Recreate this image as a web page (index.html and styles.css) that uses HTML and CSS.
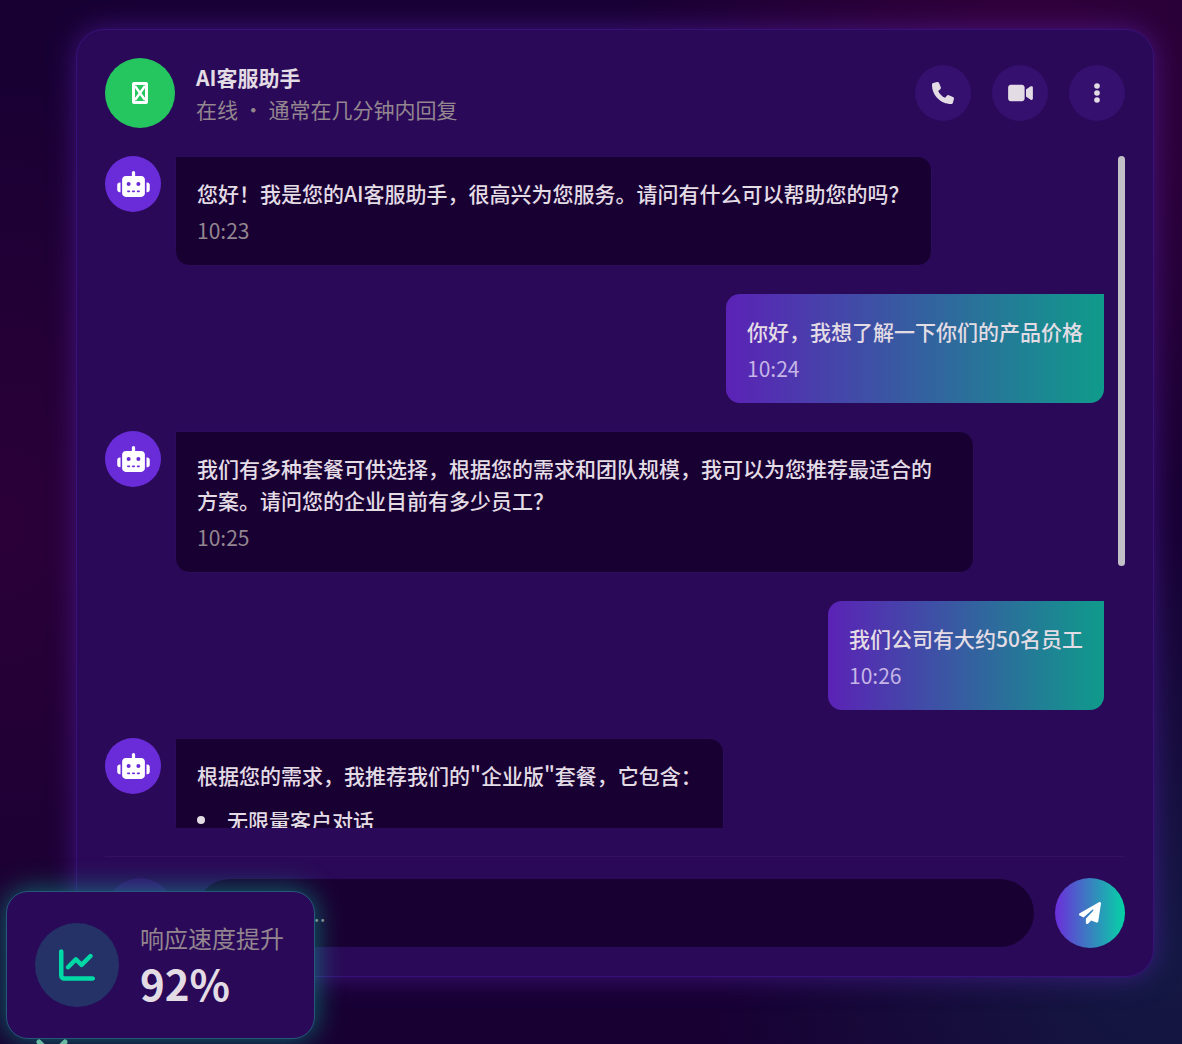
FILE: index.html
```html
<!DOCTYPE html>
<html lang="zh-CN">
<head>
    <meta charset="UTF-8">
    <meta name="viewport" content="width=device-width, initial-scale=1.0">
    <title>AI客服助手</title>
    <link rel="stylesheet" href="styles.css">
</head>
<body>
    <!-- shared icons -->
    <svg class="sprite" aria-hidden="true">
        <symbol id="icon-robot" viewBox="0 0 640 512">
            <path d="M320 0c17.7 0 32 14.3 32 32V96H472c39.8 0 72 32.2 72 72V440c0 39.8-32.2 72-72 72H168c-39.8 0-72-32.2-72-72V168c0-39.8 32.2-72 72-72H288V32c0-17.7 14.3-32 32-32zM208 384c-8.8 0-16 7.2-16 16s7.2 16 16 16h32c8.8 0 16-7.2 16-16s-7.2-16-16-16H208zm96 0c-8.8 0-16 7.2-16 16s7.2 16 16 16h32c8.8 0 16-7.2 16-16s-7.2-16-16-16H304zm96 0c-8.8 0-16 7.2-16 16s7.2 16 16 16h32c8.8 0 16-7.2 16-16s-7.2-16-16-16H400zM264 256a40 40 0 1 0 -80 0 40 40 0 1 0 80 0zm152 40a40 40 0 1 0 0-80 40 40 0 1 0 0 80zM48 224H64V416H48c-26.5 0-48-21.5-48-48V272c0-26.5 21.5-48 48-48zm544 0c26.5 0 48 21.5 48 48v96c0 26.5-21.5 48-48 48H576V224h16z"/>
        </symbol>
    </svg>

    <main class="chat-card">
        <header class="chat-header">
            <div class="agent-avatar">
                <svg width="16" height="22" viewBox="0 0 16 22" fill="none" stroke="currentColor" stroke-width="3">
                    <rect x="1.5" y="1.5" width="13" height="19" rx="0.5"/>
                    <path stroke-width="2.4" d="M3 4l10 14M13 4L3 18"/>
                </svg>
            </div>
            <div class="agent-info">
                <h1>AI客服助手</h1>
                <p>在线 · 通常在几分钟内回复</p>
            </div>
            <div class="header-actions">
                <button type="button" class="round-button" aria-label="语音通话">
                    <svg width="22" height="22" viewBox="0 0 512 512"><path d="M164.9 24.6c-7.7-18.6-28-28.5-47.4-23.2l-88 24C12.1 30.2 0 46 0 64C0 311.4 200.6 512 448 512c18 0 33.8-12.1 38.6-29.5l24-88c5.3-19.4-4.6-39.7-23.2-47.4l-96-40c-16.3-6.8-35.2-2.1-46.3 11.6L304.7 368C234.3 334.7 177.3 277.7 144 207.3L193.3 167c13.7-11.2 18.4-30 11.6-46.3l-40-96z"/></svg>
                </button>
                <button type="button" class="round-button" aria-label="视频通话">
                    <svg width="25" height="22" viewBox="0 0 576 512"><path d="M0 128C0 92.7 28.7 64 64 64H320c35.3 0 64 28.7 64 64V384c0 35.3-28.7 64-64 64H64c-35.3 0-64-28.7-64-64V128zM559.1 99.8c10.4 5.6 16.9 16.4 16.9 28.2V384c0 11.8-6.5 22.6-16.9 28.2s-23 5-32.9-1.6l-96-64L416 337.1V320 192 174.9l14.2-9.5 96-64c9.8-6.5 22.4-7.2 32.9-1.6z"/></svg>
                </button>
                <button type="button" class="round-button" aria-label="更多">
                    <svg width="6" height="22" viewBox="0 0 6 22"><circle cx="3" cy="4" r="2.8"/><circle cx="3" cy="11" r="2.8"/><circle cx="3" cy="18" r="2.8"/></svg>
                </button>
            </div>
        </header>

        <div class="chat-body">
            <div class="messages">
                <div class="message bot">
                    <div class="bot-avatar"><svg width="33" height="26"><use href="#icon-robot"/></svg></div>
                    <div class="bubble">
                        <p>您好！我是您的AI客服助手，很高兴为您服务。请问有什么可以帮助您的吗？</p>
                        <time>10:23</time>
                    </div>
                </div>
                <div class="message user">
                    <div class="bubble">
                        <p>你好，我想了解一下你们的产品价格</p>
                        <time>10:24</time>
                    </div>
                </div>
                <div class="message bot">
                    <div class="bot-avatar"><svg width="33" height="26"><use href="#icon-robot"/></svg></div>
                    <div class="bubble">
                        <p>我们有多种套餐可供选择，根据您的需求和团队规模，我可以为您推荐最适合的方案。请问您的企业目前有多少员工？</p>
                        <time>10:25</time>
                    </div>
                </div>
                <div class="message user">
                    <div class="bubble">
                        <p>我们公司有大约50名员工</p>
                        <time>10:26</time>
                    </div>
                </div>
                <div class="message bot">
                    <div class="bot-avatar"><svg width="33" height="26"><use href="#icon-robot"/></svg></div>
                    <div class="bubble">
                        <p>根据您的需求，我推荐我们的"企业版"套餐，它包含：</p>
                        <ul>
                            <li>无限量客户对话</li>
                        </ul>
                    </div>
                </div>
            </div>
            <div class="scroll-track"><div class="scroll-thumb"></div></div>
        </div>

        <form class="chat-form">
            <button type="button" class="attach-button" aria-label="添加附件"></button>
            <input type="text" class="chat-input" placeholder="输入消息..." aria-label="输入消息">
            <button type="submit" class="send-button" aria-label="发送">
                <svg width="22" height="22" viewBox="0 0 512 512"><path d="M498.1 5.6c10.1 7 15.4 19.1 13.5 31.2l-64 416c-1.5 9.7-7.4 18.2-16 23s-18.9 5.4-28 1.6L284 427.7l-68.5 74.1c-8.9 9.7-22.9 12.9-35.2 8.1S160 493.2 160 480V396.4c0-4 1.5-7.8 4.2-10.7L331.8 202.8c5.8-6.3 5.6-16-.4-22s-15.7-6.4-22-.7L106 360.8 17.7 316.6C7.1 311.3 .3 300.7 0 288.9s5.9-22.8 16.1-28.7l448-256c10.7-6.1 23.9-5.5 34 1.4z"/></svg>
            </button>
        </form>
    </main>

    <!-- scroll hint under the floating card -->
    <svg class="scroll-hint" width="32" height="20" viewBox="0 0 32 20" fill="none" stroke="currentColor" stroke-width="5" stroke-linecap="round" stroke-linejoin="round"><path d="M3 3l13 13L29 3"/></svg>

    <aside class="stat-card">
        <div class="stat-icon">
            <svg width="36" height="36" viewBox="0 0 512 512"><path d="M64 64c0-17.7-14.3-32-32-32S0 46.3 0 64V400c0 44.2 35.8 80 80 80H480c17.7 0 32-14.3 32-32s-14.3-32-32-32H80c-8.8 0-16-7.2-16-16V64zm406.6 86.6c12.5-12.5 12.5-32.8 0-45.3s-32.8-12.5-45.3 0L320 210.7l-57.4-57.4c-12.5-12.5-32.8-12.5-45.3 0l-112 112c-12.5 12.5-12.5 32.8 0 45.3s32.8 12.5 45.3 0L240 221.3l57.4 57.4c12.5 12.5 32.8 12.5 45.3 0l128-128z"/></svg>
        </div>
        <div>
            <p class="stat-label">响应速度提升</p>
            <p class="stat-value">92%</p>
        </div>
    </aside>
</body>
</html>
```
FILE: styles.css
```css
* {
    box-sizing: border-box;
    margin: 0;
    padding: 0;
}

body {
    position: relative;
    display: flex;
    height: 100vh;
    padding: 29px 28px 67px 76px;
    overflow: hidden;
    font-family: "Noto Sans CJK SC", sans-serif;
    font-size: 21px;
    line-height: 32px;
    color: #e3dce5;
    background:
        radial-gradient(circle at 87% 10%, rgba(100, 0, 72, 0.4), transparent 30%),
        radial-gradient(circle at 98% 92%, rgba(14, 60, 90, 0.42), transparent 30%),
        radial-gradient(circle at 0% 50%, rgba(70, 0, 65, 0.42), transparent 36%),
        #180033;
}

button,
input {
    border: none;
    font: inherit;
    color: inherit;
}

button {
    display: flex;
    align-items: center;
    justify-content: center;
    flex-shrink: 0;
    border-radius: 50%;
    cursor: pointer;
}

svg {
    display: block;
    fill: currentColor;
}

svg[fill="none"] {
    fill: none;
}

.sprite {
    position: absolute;
    width: 0;
    height: 0;
}

.chat-card {
    flex: 1;
    min-width: 0;
    display: flex;
    flex-direction: column;
    padding: 28px;
    border: 1px solid #38127a;
    border-radius: 28px;
    background: #2a0a58;
    box-shadow: 0 0 28px rgba(100, 40, 200, 0.5);
}

/* header */
.chat-header {
    display: flex;
    align-items: center;
    gap: 21px;
    margin-bottom: 28px;
}

.agent-avatar {
    display: flex;
    align-items: center;
    justify-content: center;
    width: 70px;
    height: 70px;
    border-radius: 50%;
    color: #fff;
    background: #25c560;
}

.agent-info {
    flex: 1;
}

.agent-info h1 {
    font-size: 21px;
    font-weight: 700;
}

.agent-info p {
    color: #93868f;
}

.header-actions {
    display: flex;
    gap: 21px;
}

.round-button {
    width: 56px;
    height: 56px;
    background: #35106e;
}

/* messages */
.chat-body {
    flex: 1;
    min-height: 0;
    display: flex;
    gap: 14px;
}

.messages {
    flex: 1;
    min-width: 0;
    display: flex;
    flex-direction: column;
    gap: 28px;
    overflow: hidden;
}

.message {
    display: flex;
    align-items: flex-start;
    gap: 14px;
    flex-shrink: 0;
}

.message.user {
    justify-content: flex-end;
}

.bot-avatar {
    display: flex;
    align-items: center;
    justify-content: center;
    flex-shrink: 0;
    width: 56px;
    height: 56px;
    border-radius: 50%;
    color: #fff;
    background: #6a2cd8;
}

.bubble {
    max-width: 80%;
    padding: 21px;
    border-radius: 14px;
    font-weight: 500;
}

.bot .bubble {
    padding-top: 20px;
    border: 1px solid #2d0b5c;
    border-top-left-radius: 0;
    background: #190033;
}

.user .bubble {
    border-top-right-radius: 0;
    background: linear-gradient(90deg, #5b22b6, #0f9b8b);
}

.bubble time {
    display: block;
    margin-top: 7px;
    line-height: 28px;
    font-weight: 400;
    color: #93868f;
}

.user .bubble time {
    color: #c5b5e6;
}

.bubble ul {
    margin-top: 13px;
    list-style: none;
}

.bubble li {
    display: flex;
    align-items: center;
    gap: 22px;
}

.bubble li::before {
    content: "";
    width: 8px;
    height: 8px;
    border-radius: 50%;
    background: currentColor;
}

.scroll-track {
    width: 7px;
}

.scroll-thumb {
    height: 61%;
    border-radius: 4px;
    background: #c2bfc8;
}

/* input row */
.chat-form {
    display: flex;
    align-items: center;
    gap: 21px;
    margin-top: 28px;
    padding-top: 21px;
    border-top: 1px solid #34125f;
}

.attach-button,
.send-button {
    width: 70px;
    height: 70px;
}

.attach-button {
    background: #35106e;
}

.send-button {
    color: #fff;
    background: linear-gradient(90deg, #6c2edb, #05d3a6);
}

.chat-input {
    flex: 1;
    min-width: 0;
    height: 68px;
    padding: 0 28px;
    border-radius: 34px;
    background: #190033;
}

.chat-input::placeholder {
    color: #93868f;
}

/* floating card */
.stat-card {
    position: absolute;
    left: 6px;
    bottom: 5px;
    display: flex;
    align-items: center;
    gap: 21px;
    padding: 28px 30px 28px 28px;
    border: 1px solid #25577a;
    border-radius: 22px;
    background: #2a0a58;
    box-shadow: 0 0 28px rgba(0, 217, 165, 0.5);
}

.stat-icon {
    display: flex;
    align-items: center;
    justify-content: center;
    width: 84px;
    height: 84px;
    border-radius: 50%;
    color: #00d9a5;
    background: #243268;
}

.stat-label {
    font-size: 24px;
    line-height: 36px;
    color: #93868f;
}

.stat-value {
    font-size: 42px;
    line-height: 54px;
    font-weight: 700;
}

.scroll-hint {
    position: absolute;
    left: 36px;
    bottom: -15px;
    color: #84b5a4;
}
```
